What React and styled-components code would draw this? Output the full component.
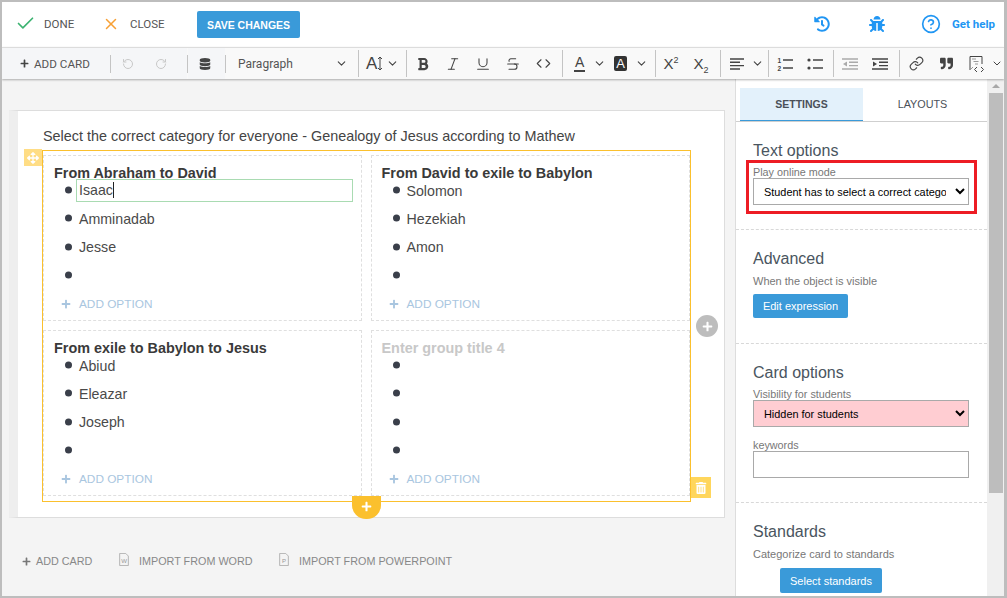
import styled, { createGlobalStyle } from "styled-components";
import {
  Check,
  X,
  CircleHelp,
  RotateCcw,
  RotateCw,
  ChevronDown,
  Italic,
  Underline,
  Strikethrough,
  Code,
  Link,
} from "lucide-react";
import {
  FaArrowsAlt,
  FaBold,
  FaBug,
  FaDatabase,
  FaHistory,
  FaPlus,
  FaQuoteRight,
  FaTrashAlt,
} from "react-icons/fa";

const GlobalStyle = createGlobalStyle`
  html, body {
    margin: 0;
    padding: 0;
    background: #fff;
  }
  * {
    box-sizing: border-box;
  }
`;

const Frame = styled.div`
  width: 1007px;
  height: 598px;
  border: solid #bdbdbd;
  border-width: 2px 3px 2px 2px;
  display: flex;
  flex-direction: column;
  overflow: hidden;
  font-family: "Liberation Sans", Arial, sans-serif;
  color: #444;
`;

const Header = styled.header`
  height: 45px;
  flex: none;
  display: flex;
  align-items: center;
  padding-left: 13px;
  background: #fff;
  font-family: Roboto, sans-serif;
`;

const HeaderAction = styled.div`
  display: flex;
  align-items: center;
  gap: ${(props) => props.$gap}px;
  width: ${(props) => props.$w}px;
  margin-bottom: 2px;
  font-size: 11.5px;
  color: #555;
`;

const SaveButton = styled.button`
  width: 103px;
  height: 27px;
  border: none;
  border-radius: 2px;
  background: #3a9ad9;
  color: #fff;
  font-family: "Liberation Sans", Arial, sans-serif;
  font-size: 10.5px;
  font-weight: bold;
  padding: 0;
`;

const HeaderRight = styled.div`
  margin-left: auto;
  margin-bottom: 2px;
  display: flex;
  align-items: center;
  color: #2196f3;
  padding-right: 9px;
`;

const HeaderIcon = styled.div`
  width: ${(props) => props.$w}px;
  display: flex;
  align-items: center;
`;

const HelpText = styled.span`
  margin-left: 11px;
  font-size: 11.5px;
  font-weight: bold;
  font-family: Roboto, sans-serif;
`;

const Toolbar = styled.div`
  height: 32px;
  flex: none;
  display: flex;
  align-items: center;
  background: #f9f9f9;
  border-top: 1px solid #dcdcdc;
  box-shadow: 0 1px 2px rgba(0, 0, 0, 0.3);
  position: relative;
  z-index: 2;
  font-family: Roboto, sans-serif;
  color: #444;
`;

const ToolGroup = styled.div`
  width: ${(props) => props.$w}px;
  height: 100%;
  flex: none;
  display: flex;
  align-items: center;
  background: ${(props) => (props.$dim ? "#f5f6f8" : "transparent")};
  padding-left: ${(props) => props.$pad || 0}px;
`;

const Sep = styled.div`
  width: 1px;
  flex: none;
  height: ${(props) => (props.$short ? 18 : 27)}px;
  background: #c4c4c4;
`;

const ToolButton = styled.div`
  width: ${(props) => props.$w || 30}px;
  height: 100%;
  flex: none;
  display: flex;
  align-items: center;
  justify-content: center;
  color: ${(props) => (props.$off ? "#c8c8c8" : "#444")};
`;

const AddCardLabel = styled.span`
  font-size: 11.7px;
  color: #555;
  margin-left: 5px;
`;

const ParagraphLabel = styled.span`
  font-size: 12px;
  color: #555;
  width: 97px;
  margin-left: 12px;
`;

const SizeGlyph = styled.span`
  font-family: "Liberation Sans", Arial, sans-serif;
  font-size: 17px;
  line-height: 1;
`;

const ColorA = styled.span`
  font-family: "Liberation Sans", Arial, sans-serif;
  font-size: 14px;
  line-height: 15px;
  width: 13px;
  text-align: center;
  border-bottom: 2px solid #444;
`;

const FilledA = styled.span`
  font-family: "Liberation Sans", Arial, sans-serif;
  font-size: 13px;
  line-height: 15px;
  width: 15px;
  text-align: center;
  background: #333;
  color: #fff;
  border-radius: 2px;
`;

const ScriptX = styled.span`
  font-family: "Liberation Sans", Arial, sans-serif;
  font-size: 15px;
  line-height: 1;
  color: #444;

  sup,
  sub {
    font-size: 9px;
    line-height: 0;
  }
`;

const Body = styled.div`
  flex: 1;
  min-height: 0;
  display: flex;
`;

const Workspace = styled.main`
  width: 733px;
  flex: none;
  background: #f4f4f4;
  padding: 31px 0 0 7px;
`;

const Card = styled.section`
  width: 716px;
  height: 408px;
  background: #fff;
  border: 1px solid #ddd;
  border-left-width: 9px;
  border-left-color: #eeeeee;
  padding-top: 16px;
  position: relative;
`;

const Prompt = styled.div`
  font-size: 14.4px;
  line-height: 18px;
  color: #444;
  margin-left: 25px;
  height: 23px;
`;

const GroupsBox = styled.div`
  width: 649px;
  height: 352px;
  margin-left: 24px;
  border: 1px solid #fbc02d;
  padding: 4px 0 0;
  position: relative;
  display: grid;
  grid-template-columns: 319px 319px;
  grid-auto-rows: 166px;
  column-gap: 8.5px;
  row-gap: 9px;
`;

const Group = styled.div`
  border: 1px dashed #dfdfdf;
  padding: 11px 0 0 10px;
`;

const GroupTitle = styled.div`
  font-size: 14.4px;
  font-weight: bold;
  height: 12px;
  line-height: 13px;
  color: ${(props) => (props.$empty ? "#c8c8c8" : "#3a3a3a")};
`;

const OptionList = styled.div`
  display: flex;
  flex-direction: column;
  gap: 6.4px;
`;

const OptionRow = styled.div`
  height: 22px;
  display: flex;
  align-items: center;
  padding: 1px 0 0 11px;
  font-size: 14.2px;
  color: #4a4a4a;

  &::before {
    content: "";
    width: 7px;
    height: 7px;
    flex: none;
    border-radius: 50%;
    background: #3a3f4a;
    margin-right: 7px;
    transform: translateY(-0.5px);
  }
`;

const ActiveOption = styled.div`
  width: 277px;
  height: 23px;
  border: 1px solid #a9dbb2;
  margin: -1px 0 0 -3px;
  padding-left: 2px;
  display: flex;
  align-items: center;
`;

const Caret = styled.span`
  display: inline-block;
  width: 1px;
  height: 16px;
  background: #222;
`;

const AddOption = styled.div`
  height: 22px;
  margin-top: 6.5px;
  padding-left: 7px;
  display: flex;
  align-items: center;
  gap: 8px;
  font-size: 11.8px;
  color: #a9c6e0;
`;

const MoveHandle = styled.div`
  position: absolute;
  left: -19px;
  top: -2px;
  width: 18px;
  height: 17px;
  background: #ffdd85;
  color: #fff;
  display: flex;
  align-items: center;
  justify-content: center;
`;

const AddRight = styled.div`
  position: absolute;
  left: 653px;
  top: 164px;
  width: 22px;
  height: 22px;
  border-radius: 50%;
  background: #bdbdbd;
  color: #fff;
  display: flex;
  align-items: center;
  justify-content: center;
`;

const TrashHandle = styled.div`
  position: absolute;
  left: 648px;
  top: 326px;
  width: 20px;
  height: 21px;
  background: #ffd65c;
  color: #fff;
  display: flex;
  align-items: center;
  justify-content: center;
`;

const AddBelow = styled.div`
  position: absolute;
  left: 309px;
  top: 345px;
  width: 29px;
  height: 23px;
  background: #fbc02d;
  color: #fff;
  border-radius: 0 0 14px 14px;
  display: flex;
  align-items: center;
  justify-content: center;
  padding-bottom: 3px;
`;

const Footer = styled.div`
  display: flex;
  align-items: center;
  height: 16px;
  margin: 35px 0 0 13px;
  font-size: 10.8px;
  color: #888;
`;

const FooterItem = styled.div`
  display: flex;
  align-items: center;
  gap: ${(props) => props.$gap}px;
  width: ${(props) => props.$w}px;
  flex: none;
  white-space: nowrap;
`;

const Sidebar = styled.aside`
  flex: 1;
  min-width: 0;
  display: flex;
  background: #fff;
  border-left: 1px solid #ddd;
`;

const Panel = styled.div`
  flex: 1;
  min-width: 0;
`;

const Tabs = styled.div`
  display: flex;
  height: 33px;
  margin-top: 9px;
  padding-left: 4px;
  border-bottom: 1px solid #cfcfcf;
  box-sizing: content-box;
`;

const Tab = styled.div`
  width: ${(props) => (props.$active ? 123 : 119)}px;
  height: 33px;
  display: flex;
  align-items: center;
  justify-content: center;
  font-size: ${(props) => (props.$active ? 10.5 : 10.8)}px;
  font-weight: ${(props) => (props.$active ? "bold" : "normal")};
  color: #4a5058;
  background: ${(props) => (props.$active ? "#e3f1fb" : "transparent")};
  border-bottom: 1px solid ${(props) => (props.$active ? "#3a9ad9" : "transparent")};
`;

const OptionSection = styled.div`
  height: ${(props) => props.$h}px;
  padding: 20px 0 0 17px;
  border-bottom: ${(props) => (props.$last ? "none" : "1px dashed #d8d8d8")};
  position: relative;
`;

const SectionTitle = styled.h3`
  margin: 0;
  font-size: 16px;
  font-weight: normal;
  line-height: 18px;
  color: #4a5560;
`;

const FieldLabel = styled.div`
  font-size: 10.8px;
  height: 12px;
  line-height: 13px;
  color: #777;
  margin-top: ${(props) => props.$mt}px;
`;

const Hint = styled.div`
  font-size: 11px;
  line-height: 14px;
  color: #777;
  margin-top: 6px;
`;

const SelectBox = styled.select`
  display: block;
  width: 216px;
  height: 27px;
  border: 1px solid #a9a9a9;
  border-radius: 0;
  background-color: ${(props) => (props.$hidden ? "#ffcdd2" : "#fff")};
  color: #000;
  font-family: "Liberation Sans", Arial, sans-serif;
  font-size: 10.9px;
  padding: 0 6px 0 6px;
  outline: none;
`;

const TextBox = styled.input`
  display: block;
  width: 216px;
  height: 27px;
  border: 1px solid #a9a9a9;
  background: #fff;
  outline: none;
`;

const BlueButton = styled.button`
  display: block;
  height: ${(props) => props.$h}px;
  width: ${(props) => props.$w}px;
  margin-top: ${(props) => props.$mt}px;
  margin-left: ${(props) => props.$ml || 0}px;
  border: none;
  border-radius: 2px;
  background: #3a9ad9;
  color: #fff;
  font-family: "Liberation Sans", Arial, sans-serif;
  font-size: 11px;
  padding: 0;
`;

const Highlight = styled.div`
  position: absolute;
  left: 10px;
  top: 38px;
  width: 231px;
  height: 54px;
  border: 3px solid #ed1c24;
  pointer-events: none;
`;

const Scrollbar = styled.div`
  width: 17px;
  flex: none;
  background: #f0f0f0;
  display: flex;
  flex-direction: column;
  align-items: center;
`;

const ScrollArrow = styled.div`
  width: 0;
  height: 0;
  margin: 5px 0 5px;
  border-left: 4px solid transparent;
  border-right: 4px solid transparent;
  border-bottom: 4px solid #a8a8a8;
`;

const ScrollThumb = styled.div`
  width: 14px;
  height: 400px;
  background: #bdbdbd;
`;

const DocSvg = styled.svg`
  flex: none;
  margin-bottom: 3px;
`;

const DocIcon = ({ letter }) => (
  <DocSvg width="10" height="13" viewBox="0 0 11 15" fill="none">
    <path d="M.5.5h7l3 3v11H.5z" stroke="#aaa" />
    <text x="5.5" y="11.5" fontSize="7" fontFamily="Liberation Sans" textAnchor="middle" fill="#999">
      {letter}
    </text>
  </DocSvg>
);

const AlignIcon = () => (
  <svg width="16" height="12" viewBox="0 0 16 12" stroke="#444" strokeWidth="1.4">
    <path d="M1 1h14M1 4.3h10M1 7.6h14M1 11h10" />
  </svg>
);

const OrderedIcon = () => (
  <svg width="17" height="14" viewBox="0 0 17 14" stroke="#444" strokeWidth="1.4">
    <path d="M6 3h10M6 11h10" />
    <text x="0.5" y="5.5" fontSize="6.5" fontFamily="Liberation Sans" fontWeight="bold" stroke="none" fill="#444">
      1
    </text>
    <text x="0.5" y="13.5" fontSize="6.5" fontFamily="Liberation Sans" fontWeight="bold" stroke="none" fill="#444">
      2
    </text>
  </svg>
);

const BulletIcon = () => (
  <svg width="16" height="12" viewBox="0 0 16 12" stroke="#444" strokeWidth="1.4">
    <path d="M6 2h10M6 10h10" />
    <circle cx="2" cy="2" r="1.6" fill="#444" stroke="none" />
    <circle cx="2" cy="10" r="1.6" fill="#444" stroke="none" />
  </svg>
);

const IndentIcon = ({ out }) => (
  <svg width="16" height="12" viewBox="0 0 16 12" stroke={out ? "#aaa" : "#444"} strokeWidth="1.4">
    <path d="M0 1h16M7 4.3h9M7 7.6h9M0 11h16" />
    <path d={out ? "M5 3.5L1 6l4 2.5z" : "M1 3.5L5 6l-4 2.5z"} fill={out ? "#aaa" : "#444"} stroke="none" />
  </svg>
);

const groups = [
  { title: "From Abraham to David", options: ["Isaac", "Amminadab", "Jesse", ""], active: true },
  { title: "From David to exile to Babylon", options: ["Solomon", "Hezekiah", "Amon", ""] },
  { title: "From exile to Babylon to Jesus", options: ["Abiud", "Eleazar", "Joseph", ""] },
  { title: "Enter group title 4", options: ["", "", "", ""], empty: true },
];

const Chev = () => <ChevronDown size={13} strokeWidth={2} color="#444" />;

function App() {
  return (
    <>
      <GlobalStyle />
      <Frame>
        <Header>
          <HeaderAction $w={87} $gap={8}>
            <Check size={21} color="#3cb371" strokeWidth={1.9} />
            DONE
          </HeaderAction>
          <HeaderAction $w={95} $gap={10}>
            <X size={18} color="#f7a035" strokeWidth={2} />
            CLOSE
          </HeaderAction>
          <SaveButton>SAVE CHANGES</SaveButton>
          <HeaderRight>
            <HeaderIcon $w={55}>
              <FaHistory size={16} />
            </HeaderIcon>
            <HeaderIcon $w={52}>
              <FaBug size={16} />
            </HeaderIcon>
            <CircleHelp size={20} strokeWidth={2} />
            <HelpText>Get help</HelpText>
          </HeaderRight>
        </Header>

        <Toolbar>
          <ToolGroup $w={108} $pad={18} $dim>
            <FaPlus size={9} color="#444" />
            <AddCardLabel>ADD CARD</AddCardLabel>
          </ToolGroup>
          <Sep $short />
          <ToolGroup $w={76} $pad={1} $dim>
            <ToolButton $off $w={31}>
              <RotateCcw size={12} />
            </ToolButton>
            <ToolButton $off $w={36}>
              <RotateCw size={12} />
            </ToolButton>
          </ToolGroup>
          <Sep $short />
          <ToolGroup $w={37} $pad={2} $dim>
            <ToolButton>
              <FaDatabase size={12} />
            </ToolButton>
          </ToolGroup>
          <Sep $short />
          <ToolGroup $w={132}>
            <ParagraphLabel>Paragraph</ParagraphLabel>
            <Chev />
          </ToolGroup>
          <Sep />
          <ToolGroup $w={47} $pad={7}>
            <SizeGlyph>A</SizeGlyph>
            <svg width="6" height="15" viewBox="0 0 6 15" fill="none" stroke="#444">
              <path d="M3 1v13M1 3l2-2 2 2M1 12l2 2 2-2" />
            </svg>
            <span style={{ width: 3 }} />
            <Chev />
          </ToolGroup>
          <Sep />
          <ToolGroup $w={155} $pad={1}>
            <ToolButton>
              <FaBold size={14} />
            </ToolButton>
            <ToolButton>
              <Italic size={16} strokeWidth={1.6} />
            </ToolButton>
            <ToolButton>
              <Underline size={16} strokeWidth={1.6} />
            </ToolButton>
            <ToolButton>
              <Strikethrough size={16} strokeWidth={1.6} />
            </ToolButton>
            <ToolButton>
              <Code size={15} strokeWidth={1.8} />
            </ToolButton>
          </ToolGroup>
          <Sep />
          <ToolGroup $w={92} $pad={11}>
            <ColorA>A</ColorA>
            <ToolButton $w={29}>
              <Chev />
            </ToolButton>
            <FilledA>A</FilledA>
            <ToolButton $w={28}>
              <Chev />
            </ToolButton>
          </ToolGroup>
          <Sep />
          <ToolGroup $w={64}>
            <ToolButton>
              <ScriptX>
                X<sup>2</sup>
              </ScriptX>
            </ToolButton>
            <ToolButton>
              <ScriptX>
                X<sub>2</sub>
              </ScriptX>
            </ToolButton>
          </ToolGroup>
          <Sep />
          <ToolGroup $w={47} $pad={2}>
            <ToolButton $w={28}>
              <AlignIcon />
            </ToolButton>
            <Chev />
          </ToolGroup>
          <Sep />
          <ToolGroup $w={64} $pad={1}>
            <ToolButton>
              <OrderedIcon />
            </ToolButton>
            <ToolButton>
              <BulletIcon />
            </ToolButton>
          </ToolGroup>
          <Sep />
          <ToolGroup $w={65} $pad={1}>
            <ToolButton>
              <IndentIcon out />
            </ToolButton>
            <ToolButton>
              <IndentIcon />
            </ToolButton>
          </ToolGroup>
          <Sep />
          <ToolGroup $w={104} $pad={1}>
            <ToolButton>
              <Link size={15} strokeWidth={1.8} />
            </ToolButton>
            <ToolButton>
              <FaQuoteRight size={13} />
            </ToolButton>
            <ToolButton>
              <svg width="17" height="18" viewBox="0 0 17 18" fill="none" stroke="#444">
                <path d="M2 15V1.5h12V9" />
                <path d="M4 4h4M5.5 6.5h5M7 9h3" stroke="#999" />
                <path d="M2 15l3-3" stroke="#999" />
                <path d="M9 12l-2.5 2.5L9 17M13 12l2.5 2.5L13 17" />
              </svg>
            </ToolButton>
            <ToolButton $w={12}>
              <Chev />
            </ToolButton>
          </ToolGroup>
        </Toolbar>

        <Body>
          <Workspace>
            <Card>
              <Prompt>Select the correct category for everyone - Genealogy of Jesus according to Mathew</Prompt>
              <GroupsBox>
                {groups.map((group) => (
                  <Group key={group.title}>
                    <GroupTitle $empty={group.empty}>{group.title}</GroupTitle>
                    <OptionList>
                      {group.options.map((option, i) => (
                        <OptionRow key={i}>
                          {group.active && i === 0 ? (
                            <ActiveOption>
                              {option}
                              <Caret />
                            </ActiveOption>
                          ) : (
                            option
                          )}
                        </OptionRow>
                      ))}
                    </OptionList>
                    <AddOption>
                      <FaPlus size={10} />
                      ADD OPTION
                    </AddOption>
                  </Group>
                ))}
                <MoveHandle>
                  <FaArrowsAlt size={12} />
                </MoveHandle>
                <AddRight>
                  <FaPlus size={11} />
                </AddRight>
                <TrashHandle>
                  <FaTrashAlt size={12} />
                </TrashHandle>
                <AddBelow>
                  <FaPlus size={11} />
                </AddBelow>
              </GroupsBox>
            </Card>
            <Footer>
              <FooterItem $w={97} $gap={5}>
                <FaPlus size={9} color="#777" />
                ADD CARD
              </FooterItem>
              <FooterItem $w={160} $gap={10}>
                <DocIcon letter="W" />
                IMPORT FROM WORD
              </FooterItem>
              <FooterItem $w={180} $gap={10}>
                <DocIcon letter="P" />
                IMPORT FROM POWERPOINT
              </FooterItem>
            </Footer>
          </Workspace>

          <Sidebar>
            <Panel>
              <Tabs>
                <Tab $active>SETTINGS</Tab>
                <Tab>LAYOUTS</Tab>
              </Tabs>
              <OptionSection $h={108}>
                <SectionTitle>Text options</SectionTitle>
                <FieldLabel $mt={6}>Play online mode</FieldLabel>
                <SelectBox defaultValue="correct">
                  <option value="correct">Student has to select a correct category</option>
                </SelectBox>
                <Highlight />
              </OptionSection>
              <OptionSection $h={114}>
                <SectionTitle>Advanced</SectionTitle>
                <Hint>When the object is visible</Hint>
                <BlueButton $w={95} $h={24} $mt={6}>
                  Edit expression
                </BlueButton>
              </OptionSection>
              <OptionSection $h={159}>
                <SectionTitle>Card options</SectionTitle>
                <FieldLabel $mt={6}>Visibility for students</FieldLabel>
                <SelectBox $hidden defaultValue="hidden">
                  <option value="hidden">Hidden for students</option>
                </SelectBox>
                <FieldLabel $mt={12}>keywords</FieldLabel>
                <TextBox />
              </OptionSection>
              <OptionSection $h={100} $last>
                <SectionTitle>Standards</SectionTitle>
                <Hint>Categorize card to standards</Hint>
                <BlueButton $w={102} $h={25} $mt={7} $ml={27}>
                  Select standards
                </BlueButton>
              </OptionSection>
            </Panel>
            <Scrollbar>
              <ScrollArrow />
              <ScrollThumb />
            </Scrollbar>
          </Sidebar>
        </Body>
      </Frame>
    </>
  );
}

export default App;
